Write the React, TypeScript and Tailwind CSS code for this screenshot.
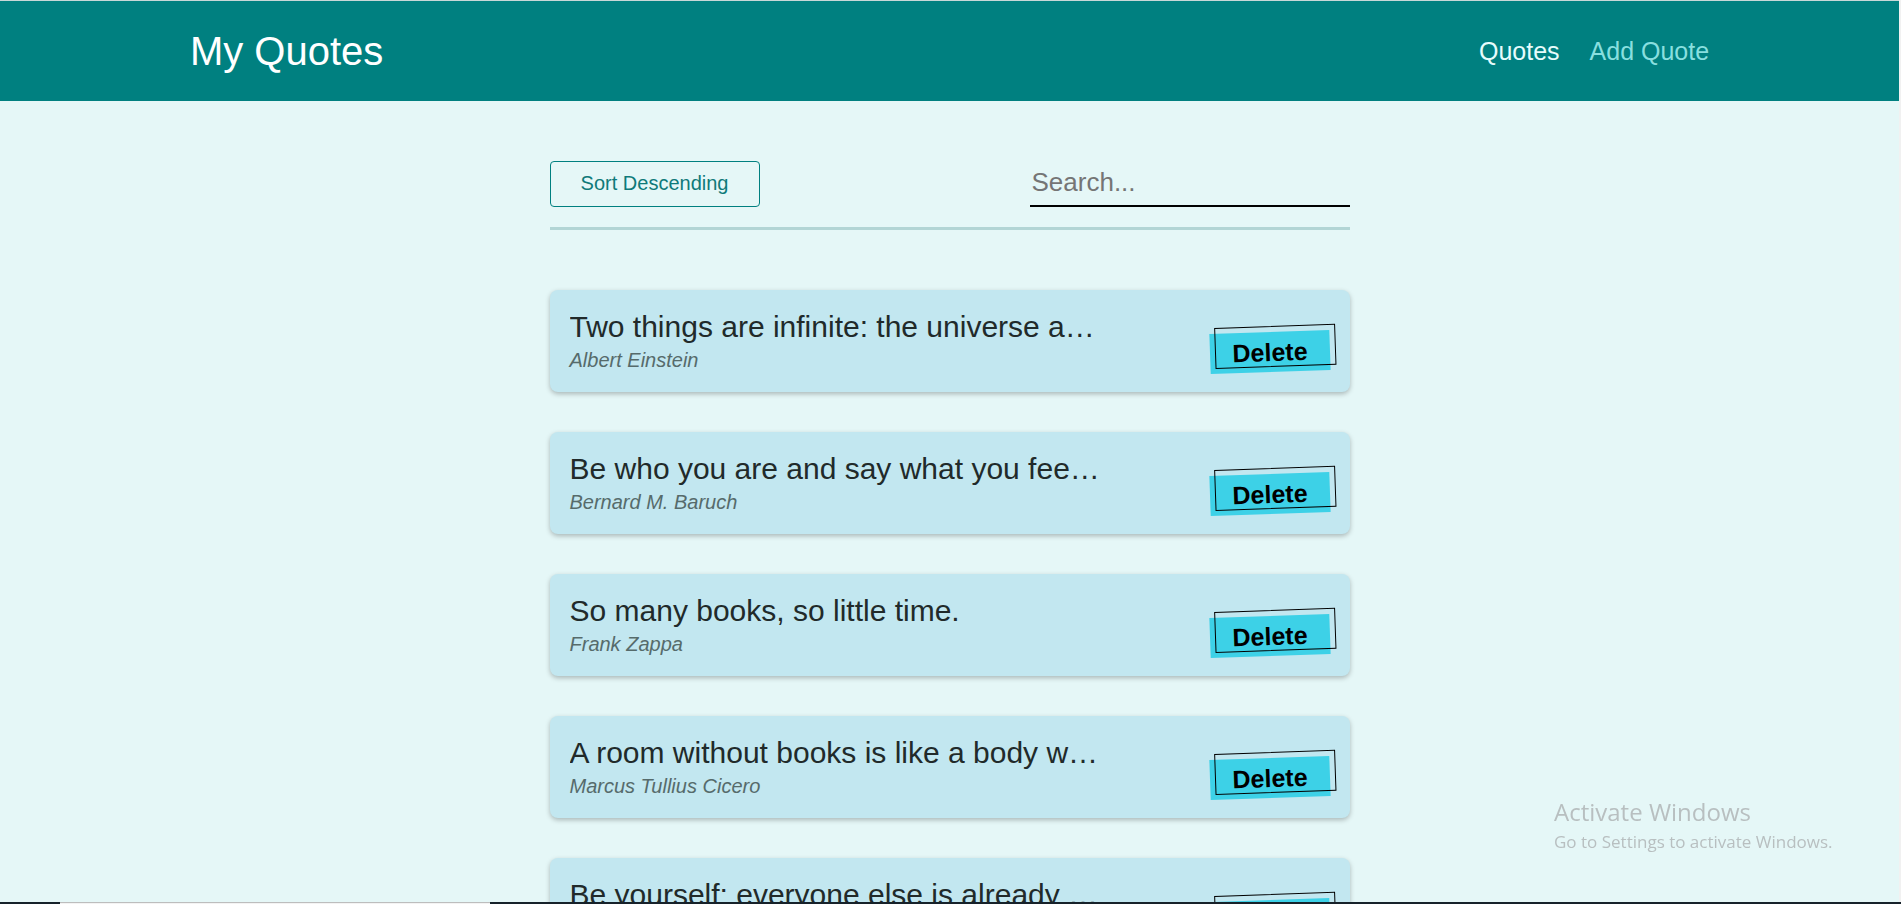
import { useState } from "react";

interface Quote {
  id: number;
  text: string;
  author: string;
}

const initialQuotes: Quote[] = [
  { id: 1, text: "Two things are infinite: the universe and human stupidity.", author: "Albert Einstein" },
  { id: 2, text: "Be who you are and say what you feel, because those who mind don't matter.", author: "Bernard M. Baruch" },
  { id: 3, text: "So many books, so little time.", author: "Frank Zappa" },
  { id: 4, text: "A room without books is like a body without a soul.", author: "Marcus Tullius Cicero" },
  { id: 5, text: "Be yourself; everyone else is already taken.", author: "Oscar Wilde" },
];

function Header() {
  return (
    <header className="flex h-[101px] shrink-0 items-center justify-between border-t border-[#c8d8d8] bg-[#008080] px-[10%]">
      <h1 className="text-[40px] leading-[46px] text-white">My Quotes</h1>
      <nav className="flex gap-[30px] text-[25px] leading-7">
        <a href="#quotes" className="text-[#e6fcfc]">Quotes</a>
        <a href="#add" className="text-[#88dfdf]">Add Quote</a>
      </nav>
    </header>
  );
}

function QuoteCard({ quote, onDelete }: { quote: Quote; onDelete: () => void }) {
  return (
    <li className="flex items-center justify-between rounded-lg bg-[#c2e7f0] p-5 shadow-[0_2px_5px_rgba(0,0,0,0.26)]">
      <figure className="w-[70%] min-w-0">
        <blockquote className="truncate text-[30px] leading-[34px] text-[#212a2a]">{quote.text}</blockquote>
        <figcaption className="mt-[5px] text-xl leading-[23px] text-[#566b6b] italic">{quote.author}</figcaption>
      </figure>
      <button
        type="button"
        onClick={onDelete}
        className="relative mt-[22px] flex h-10 w-[120px] -rotate-2 cursor-pointer items-center justify-center bg-[#3dd1e7] text-[25px] leading-7 font-bold text-black after:absolute after:bottom-[5px] after:left-[5px] after:h-[41px] after:w-[121px] after:border after:border-black after:content-['']"
      >
        Delete
      </button>
    </li>
  );
}

export default function App() {
  const [quotes, setQuotes] = useState(initialQuotes);
  const [descending, setDescending] = useState(true);
  const [search, setSearch] = useState("");

  const ordered = descending ? quotes : [...quotes].reverse();
  const visible = ordered.filter((q) => q.text.toLowerCase().includes(search.toLowerCase()));

  return (
    <div className="flex h-screen flex-col overflow-hidden bg-[#e5f7f7] font-['Liberation_Sans',Arial,sans-serif]">
      <div className="min-h-0 flex-1 overflow-hidden border-r-2 border-[#f1f1f1]">
        <Header />
        <main className="mx-auto w-full max-w-[800px] pt-[60px]">
          <div className="flex items-end justify-between border-b-[3px] border-[#b2d5d5] pb-5">
            <button
              type="button"
              onClick={() => setDescending(!descending)}
              className="h-[46px] min-w-[210px] cursor-pointer rounded-[4px] border border-[#008080] px-7 pb-[2px] text-xl leading-6 text-[#0f7a7a]"
            >
              Sort {descending ? "Descending" : "Ascending"}
            </button>
            <input
              type="text"
              aria-label="Search quotes"
              placeholder="Search..."
              value={search}
              onChange={(e) => setSearch(e.target.value)}
              className="h-[46px] w-[320px] border-b-2 border-black bg-transparent px-[2px] pb-[2px] text-[26px] leading-[30px] outline-none placeholder:text-[#757575]"
            />
          </div>
          <ul className="mt-[60px] flex flex-col gap-10">
            {visible.map((quote) => (
              <QuoteCard
                key={quote.id}
                quote={quote}
                onDelete={() => setQuotes(quotes.filter((q) => q.id !== quote.id))}
              />
            ))}
          </ul>
        </main>
      </div>
      <footer className="flex h-[2px] shrink-0 bg-[#17222a]">
        <div className="ml-[60px] w-[430px] border-t border-[#bdbdbd] bg-[#f3f3f3]" />
      </footer>
      <aside className="pointer-events-none fixed right-[62px] bottom-[50px] w-[285px] font-['Open_Sans','Noto_Sans',sans-serif] whitespace-nowrap text-[#b8bfc0]">
        <p className="mb-[2px] text-2xl leading-8">Activate Windows</p>
        <p className="text-[17px] leading-6">Go to Settings to activate Windows.</p>
      </aside>
    </div>
  );
}
